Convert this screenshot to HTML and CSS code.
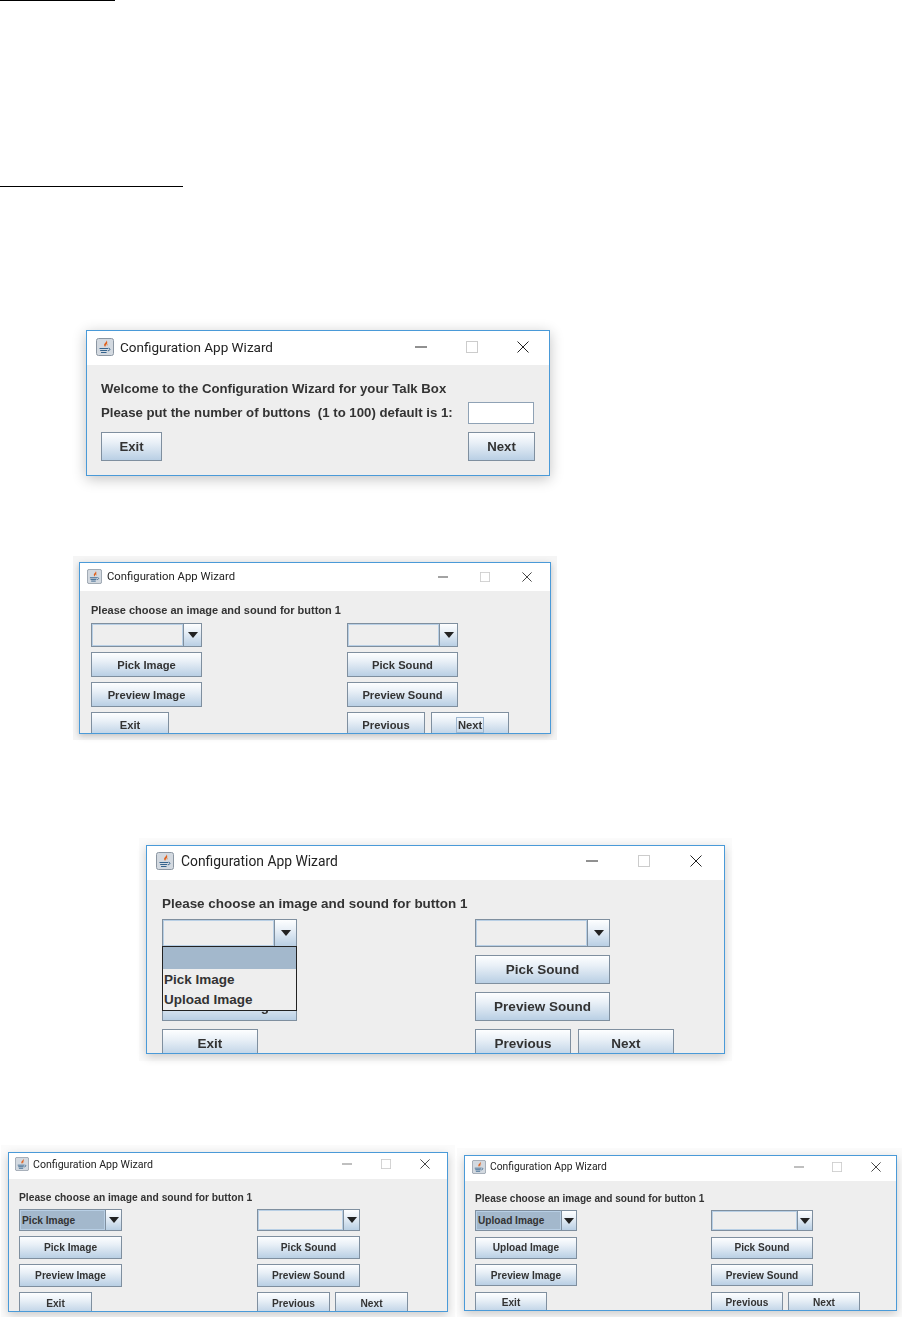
FILE: index.html
```html
<!DOCTYPE html>
<html lang="en">
<head>
<meta charset="utf-8">
<title>Configuration App Wizard</title>
<link rel="stylesheet" href="styles.css">
</head>
<body>
<svg class="sprite" aria-hidden="true">
  <symbol id="java" viewBox="0 0 18 18">
    <rect x=".5" y=".5" width="17" height="17" rx="2" fill="#d3d9e0" stroke="#8b96a2"/>
    <path d="M10.500 2c1 2.200-3.200 3.200-2.200 5.800.2.600.6 1 1 1.300-.5-1.900 3.600-3 1.200-7.100z" fill="#e0601c"/>
    <path d="M12 5.500c-1 .8-1.600 1.500-1 2.800.1-1 .7-1.800 1-2.800z" fill="#e88a4a"/>
    <path d="M3.500 10.500h8.500M4.200 12.500h7M5 14.500h5.500" stroke="#35638c" stroke-width="1.100"/>
    <path d="M12.500 10.200c2 0 2 2.300-.6 2.600" fill="none" stroke="#35638c"/>
  </symbol>
  <symbol id="min-dark" viewBox="0 0 12 12"><path d="M0 6h12" stroke="#222"/></symbol>
  <symbol id="min-soft" viewBox="0 0 12 12"><path d="M0 6h12" stroke="#666"/></symbol>
  <symbol id="max" viewBox="0 0 12 12"><rect x=".5" y=".5" width="11" height="11" fill="none" stroke="#ccc"/></symbol>
  <symbol id="close" viewBox="0 0 12 12"><path d="M.5.500l11 11M11.500.500l-11 11" stroke="#222"/></symbol>
</svg>
<main class="page">
  <div class="rule rule-a"></div>
  <div class="rule rule-b"></div>

  <section class="win win-a">
    <header class="titlebar">
      <svg class="jicon"><use href="#java"/></svg>
      <span class="title">Configuration App Wizard</span>
      <span class="controls">
        <span class="ctl"><svg><use href="#min-dark"/></svg></span>
        <span class="ctl"><svg><use href="#max"/></svg></span>
        <span class="ctl"><svg><use href="#close"/></svg></span>
      </span>
    </header>
    <div class="body">
      <p class="prompt">Welcome to the Configuration Wizard for your Talk Box</p>
      <div class="row row-input">
        <p class="prompt">Please put the number of buttons&nbsp; (1 to 100) default is 1:</p>
        <span class="field"></span>
      </div>
      <div class="row row-actions">
        <button class="btn btn-exit">Exit</button>
        <button class="btn btn-next">Next</button>
      </div>
    </div>
  </section>

  <section class="win win-b">
    <header class="titlebar">
      <svg class="jicon"><use href="#java"/></svg>
      <span class="title">Configuration App Wizard</span>
      <span class="controls">
        <span class="ctl"><svg><use href="#min-dark"/></svg></span>
        <span class="ctl"><svg><use href="#max"/></svg></span>
        <span class="ctl"><svg><use href="#close"/></svg></span>
      </span>
    </header>
    <div class="body">
      <p class="prompt">Please choose an image and sound for button 1</p>
      <div class="cols">
        <div class="col">
          <div class="combo"><span class="combo-value"></span><span class="combo-arrow"></span></div>
          <button class="btn">Pick Image</button>
          <button class="btn">Preview Image</button>
          <button class="btn btn-nav">Exit</button>
        </div>
        <div class="col">
          <div class="combo"><span class="combo-value"></span><span class="combo-arrow"></span></div>
          <button class="btn">Pick Sound</button>
          <button class="btn">Preview Sound</button>
          <div class="nav">
            <button class="btn btn-nav">Previous</button>
            <button class="btn btn-nav"><span class="focus">Next</span></button>
          </div>
        </div>
      </div>
    </div>
  </section>

  <section class="win win-c">
    <header class="titlebar">
      <svg class="jicon"><use href="#java"/></svg>
      <span class="title">Configuration App Wizard</span>
      <span class="controls">
        <span class="ctl"><svg><use href="#min-dark"/></svg></span>
        <span class="ctl"><svg><use href="#max"/></svg></span>
        <span class="ctl"><svg><use href="#close"/></svg></span>
      </span>
    </header>
    <div class="body">
      <p class="prompt">Please choose an image and sound for button 1</p>
      <div class="cols">
        <div class="col">
          <div class="combo">
            <span class="combo-value"></span><span class="combo-arrow"></span>
            <ul class="popup">
              <li class="popup-item popup-selected"></li>
              <li class="popup-item">Pick Image</li>
              <li class="popup-item">Upload Image</li>
            </ul>
          </div>
          <button class="btn">Pick Image</button>
          <button class="btn">Preview Image</button>
          <button class="btn btn-nav">Exit</button>
        </div>
        <div class="col">
          <div class="combo"><span class="combo-value"></span><span class="combo-arrow"></span></div>
          <button class="btn">Pick Sound</button>
          <button class="btn">Preview Sound</button>
          <div class="nav">
            <button class="btn btn-nav">Previous</button>
            <button class="btn btn-nav">Next</button>
          </div>
        </div>
      </div>
    </div>
  </section>

  <section class="win win-d">
    <header class="titlebar">
      <svg class="jicon"><use href="#java"/></svg>
      <span class="title">Configuration App Wizard</span>
      <span class="controls">
        <span class="ctl"><svg><use href="#min-soft"/></svg></span>
        <span class="ctl"><svg><use href="#max"/></svg></span>
        <span class="ctl"><svg><use href="#close"/></svg></span>
      </span>
    </header>
    <div class="body">
      <p class="prompt">Please choose an image and sound for button 1</p>
      <div class="cols">
        <div class="col">
          <div class="combo"><span class="combo-value combo-selected">Pick Image</span><span class="combo-arrow"></span></div>
          <button class="btn">Pick Image</button>
          <button class="btn">Preview Image</button>
          <button class="btn btn-nav">Exit</button>
        </div>
        <div class="col">
          <div class="combo"><span class="combo-value"></span><span class="combo-arrow"></span></div>
          <button class="btn">Pick Sound</button>
          <button class="btn">Preview Sound</button>
          <div class="nav">
            <button class="btn btn-nav">Previous</button>
            <button class="btn btn-nav">Next</button>
          </div>
        </div>
      </div>
    </div>
  </section>

  <section class="win win-e">
    <header class="titlebar">
      <svg class="jicon"><use href="#java"/></svg>
      <span class="title">Configuration App Wizard</span>
      <span class="controls">
        <span class="ctl"><svg><use href="#min-soft"/></svg></span>
        <span class="ctl"><svg><use href="#max"/></svg></span>
        <span class="ctl"><svg><use href="#close"/></svg></span>
      </span>
    </header>
    <div class="body">
      <p class="prompt">Please choose an image and sound for button 1</p>
      <div class="cols">
        <div class="col">
          <div class="combo"><span class="combo-value combo-selected">Upload Image</span><span class="combo-arrow"></span></div>
          <button class="btn">Upload Image</button>
          <button class="btn">Preview Image</button>
          <button class="btn btn-nav">Exit</button>
        </div>
        <div class="col">
          <div class="combo"><span class="combo-value"></span><span class="combo-arrow"></span></div>
          <button class="btn">Pick Sound</button>
          <button class="btn">Preview Sound</button>
          <div class="nav">
            <button class="btn btn-nav">Previous</button>
            <button class="btn btn-nav">Next</button>
          </div>
        </div>
      </div>
    </div>
  </section>
</main>
</body>
</html>
```

FILE: styles.css
```css
* { box-sizing: border-box; }
html, body { margin: 0; padding: 0; background: #fff; }
.sprite { position: absolute; width: 0; height: 0; }
.page {
  position: relative;
  width: 902px;
  height: 1317px;
  overflow: hidden;
  font-family: "Liberation Sans", Arial, sans-serif;
  color: #333;
}
.rule { background: #000; height: 1px; }
.rule-a { width: 115px; }
.rule-b { width: 183px; margin-top: 185px; }

.win {
  position: absolute;
  display: flex;
  flex-direction: column;
  background: #eeeeee;
  border: 1px solid #4a9ad8;
  box-shadow: 0 3px 9px rgba(0, 0, 0, .2), 0 0 0 7px #fbfbfb;
  overflow: hidden;
}
.win-a {
  left: 86px; top: 330px; width: 464px; height: 146px;
  box-shadow: 0 3px 13px rgba(0, 0, 0, .24);
  --title-h: 34px; --title-pb: 2px; --title-fs: 13.500px; --title-pl: 9px; --icon: 18px; --title-gap: 6px; --pad-l: 14px;
  --ctl: 51px; --ctl-icon: 12px; --ctl-end: 1px; --fs: 13.200px; --prompt-fs: 13.200px;
}
.win-b {
  left: 79px; top: 562px; width: 472px; height: 172px;
  box-shadow: 0 2px 6px rgba(0, 0, 0, .22), 0 0 0 6px #f5f5f5;
  --title-h: 28px; --title-pb: 1px; --title-fs: 11.300px; --title-pl: 7px; --icon: 15px; --title-gap: 5px; --pad-l: 11px;
  --ctl: 42px; --ctl-icon: 10px; --ctl-end: 2px; --fs: 11.200px; --prompt-fs: 11px;
  --pad-t: 6px; --prompt-h: 26px; --combo-h: 24px; --btn-h: 25px; --gap: 5px;
  --col: 111px; --col-gap: 145px; --nav-w: 78px; --nav-gap: 6px; --arrow: 18px;
}
.win-c {
  left: 146px; top: 845px; width: 579px; height: 209px;
  --title-h: 34px; --title-pb: 4px; --title-fs: 13.850px; --title-pl: 9px; --icon: 18px; --title-gap: 7px; --pad-l: 15px;
  --ctl: 52px; --ctl-icon: 12px; --ctl-end: 2px; --fs: 13.500px; --prompt-fs: 13.450px;
  --pad-t: 7px; --prompt-h: 32px; --combo-h: 28px; --btn-h: 29px; --gap: 8px;
  --col: 135px; --col-gap: 178px; --nav-w: 96px; --nav-gap: 7px; --arrow: 22px;
}
.win-d {
  left: 8px; top: 1152px; width: 440px; height: 160px;
  --title-h: 26px; --title-pb: 4px; --title-fs: 10.600px; --title-pl: 6px; --icon: 14px; --title-gap: 4px; --pad-l: 10px;
  --ctl: 39px; --ctl-icon: 10px; --ctl-end: 3px; --fs: 10.200px; --prompt-fs: 10.270px;
  --pad-t: 6px; --prompt-h: 24px; --combo-h: 22px; --btn-h: 23px; --gap: 5px;
  --col: 103px; --col-gap: 135px; --nav-w: 73px; --nav-gap: 5px; --arrow: 16px;
}
.win-e {
  left: 464px; top: 1155px; width: 433px; height: 156px;
  --title-h: 25px; --title-pb: 4px; --title-fs: 10.300px; --title-pl: 7px; --icon: 14px; --title-gap: 4px; --pad-l: 10px;
  --ctl: 38.500px; --ctl-icon: 10px; --ctl-end: 1px; --fs: 10.150px; --prompt-fs: 10.100px;
  --pad-t: 5px; --prompt-h: 24px; --combo-h: 21px; --btn-h: 22px; --gap: 5.500px;
  --col: 102px; --col-gap: 134px; --nav-w: 72px; --nav-gap: 5px; --arrow: 15px;
}

.titlebar {
  flex: none;
  display: flex;
  align-items: center;
  gap: var(--title-gap);
  height: var(--title-h);
  padding: 0 0 var(--title-pb) var(--title-pl);
  background: #fff;
}
.jicon { width: var(--icon); height: var(--icon); flex: none; }
.title {
  font-family: Roboto, "Open Sans", sans-serif;
  font-size: var(--title-fs);
  color: #222;
  white-space: nowrap;
  filter: blur(.3px);
}
.controls { margin-left: auto; display: flex; padding-right: var(--ctl-end); }
.ctl {
  width: var(--ctl);
  display: flex;
  justify-content: center;
  align-items: center;
}
.ctl svg { width: var(--ctl-icon); height: var(--ctl-icon); display: block; }

.body {
  flex: 1;
  min-height: 0;
  padding: var(--pad-t, 11px) 14px 0 var(--pad-l);
  font-size: var(--fs);
  font-weight: bold;
  filter: blur(.3px);
}
.prompt {
  margin: 0;
  display: flex;
  align-items: center;
  height: var(--prompt-h, 24px);
  font-size: var(--prompt-fs);
  white-space: nowrap;
}
.row { display: flex; justify-content: space-between; }
.row-input { align-items: center; height: 25px; }
.row-actions { margin-top: 7px; }
.field {
  width: 66px;
  height: 22px;
  margin-right: 1px;
  background: #fff;
  border: 1px solid #8fa2b5;
}

.btn {
  display: flex;
  align-items: center;
  justify-content: center;
  padding: 0;
  margin: 0;
  width: 100%;
  height: var(--btn-h);
  flex: none;
  border: 1px solid #7f8f9f;
  background: linear-gradient(#fdfeff 0%, #e9f0f7 35%, #b9cfe4 100%);
  font: inherit;
  color: #333;
  white-space: nowrap;
}
.win-a .btn { height: 29px; }
.btn-exit { width: 61px; }
.btn-next { width: 67px; }
.btn-nav { width: var(--nav-w); }
.focus { outline: 1px solid #9db6cf; outline-offset: 1px; }

.cols { display: flex; gap: var(--col-gap); }
.col {
  width: var(--col);
  flex: none;
  display: flex;
  flex-direction: column;
  gap: var(--gap);
}
.nav { display: flex; gap: var(--nav-gap); width: max-content; }

.combo {
  position: relative;
  display: flex;
  flex: none;
  height: var(--combo-h);
  border: 1px solid #7f8f9f;
  background: #eee;
}
.combo-value {
  flex: 1;
  display: flex;
  align-items: center;
  padding-left: 2px;
  border: 1px solid #b8cfe5;
  white-space: nowrap;
}
.combo-selected { background: #a3b8cc; padding-left: 1px; }
.combo-arrow {
  position: relative;
  flex: none;
  width: var(--arrow);
  border-left: 1px solid #7f8f9f;
  background: linear-gradient(#fdfeff 0%, #e9f0f7 35%, #b9cfe4 100%);
}
.combo-arrow::after {
  content: "";
  position: absolute;
  left: 50%;
  top: 50%;
  margin: -3px 0 0 -5px;
  border-left: 5px solid transparent;
  border-right: 5px solid transparent;
  border-top: 6px solid #222;
}

.popup {
  position: absolute;
  z-index: 2;
  left: -1px;
  right: -1px;
  top: 100%;
  margin: 0;
  padding: 0;
  list-style: none;
  height: 65px;
  background: #eee;
  border: 1px solid #222;
}
.popup-item {
  display: flex;
  align-items: center;
  height: 20.500px;
  padding-left: 1px;
}
.popup-selected { height: 22px; background: #a3b8cc; }
```
